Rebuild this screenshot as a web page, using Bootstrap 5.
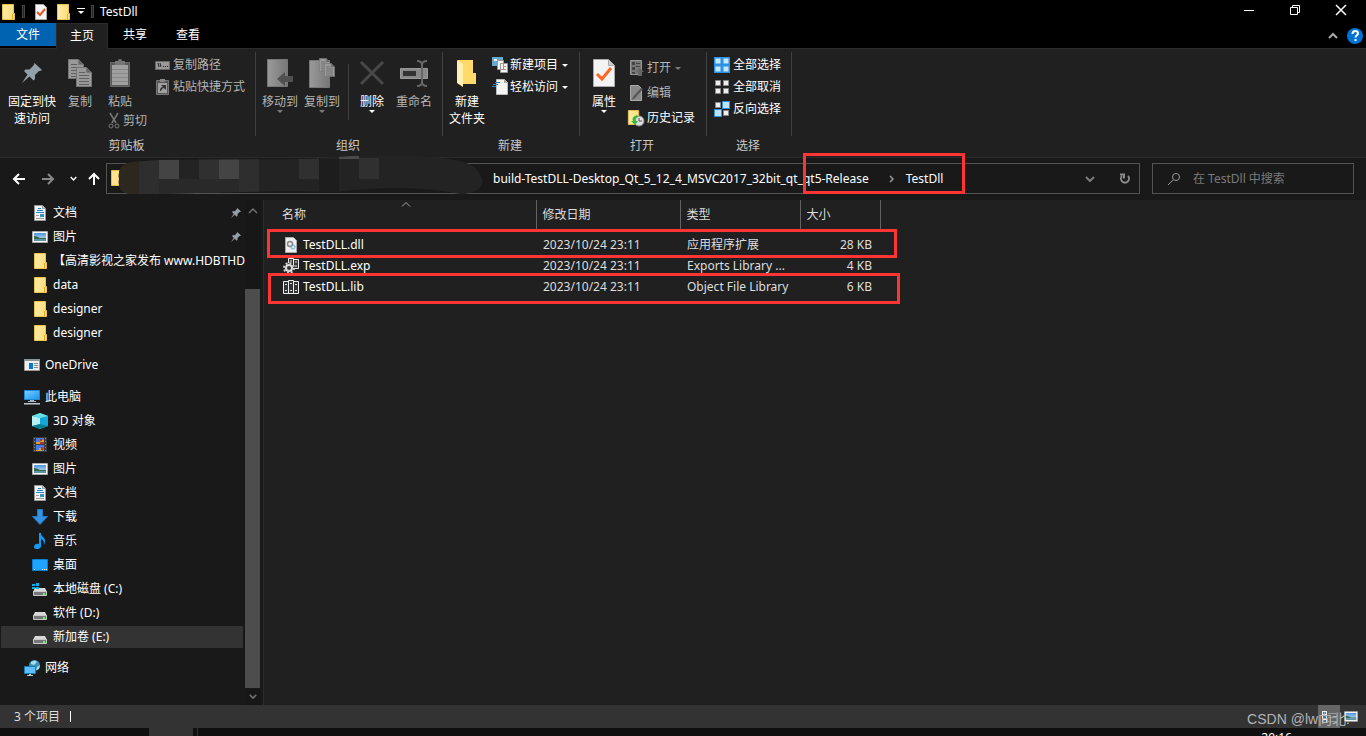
<!DOCTYPE html>
<html lang="zh-CN" data-bs-theme="dark">
<head>
<meta charset="utf-8">
<meta name="viewport" content="width=device-width, initial-scale=1">
<title>TestDll</title>
<link href="https://cdn.jsdelivr.net/npm/bootstrap@5.3.0/dist/css/bootstrap.min.css" rel="stylesheet">
<style>
body{font:12px/16px "Noto Sans","Noto Sans CJK SC",sans-serif;background:#191919;color:#fff}
button{font:inherit;color:inherit;background:none;border:0;padding:0;white-space:nowrap}
svg{display:block;flex:none;overflow:visible}
.titlebar{height:23px;background:#000}
.titlebar .sys{width:46px;height:23px;display:flex;align-items:center;justify-content:center;padding:0 4px 3px 0}
.vbar{width:3px;height:13px;border:1px solid #444;background:#222}
.quick{gap:6px}
.quick .vbar:first-of-type{margin-right:2px}
.tabs{height:26px;background:#000;border-bottom:1px solid #2b2b2b}
.tabs button{height:26px;padding:0 14px 2px 15px}
.tabs .file{background:#0063b1;width:56px;height:23px;padding:0}
.tabs .active{background:#202020;border:1px solid #2b2b2b;border-bottom:0;width:52px;padding:0 0 2px}
.tabs .fold{padding:0;height:auto;color:#aaa}
.ribbon{background:#202020;height:109px;border-bottom:1px solid #2b2b2b}
.rgroup{position:relative;display:flex;flex-direction:column;height:108px}
.rgroup::after{content:"";position:absolute;right:0;top:3px;height:84px;width:1px;background:#414141}
.rbody{display:flex;height:88px;padding-top:8px}
.rname{text-align:center;line-height:17px;color:#c8c8c8;padding-right:3px}
.big{display:flex;flex-direction:column;align-items:center;line-height:17px}
.big .pic{height:32px;margin-bottom:4px;display:flex;align-items:center}
.smallb{display:flex;align-items:center;height:22px}
.smallb svg{margin-right:3px}
.stack{margin-top:-3px}
.stack-loose{display:flex;flex-direction:column;gap:3px}
.dim{color:#b4b4b4}.dim2{color:#7c7c7c}
.caret{width:0;height:0;border:3px solid transparent;border-top-color:currentColor;border-bottom:0}
.g1{width:256px}.g2{width:187px}.g3{width:137px}.g4{width:127px}.g5{width:85px}
.g2 .rbody{padding-left:6px;gap:6px}
.g3 .rbody{padding-left:6px;gap:7px}
.g3 .smallb svg{margin-right:2px}
.g5 .rbody{padding:5px 0 0 7px}
.insep{width:1px;height:56px;margin:7px 5px 0 2px;background:#414141}
.rename{margin-left:6px}
.addr{height:42px;padding:5px 12px 6px 12px}
.field{border:1px solid #535353;height:31px;position:relative}
.crumbs{padding-left:386px;margin-left:7px}
.search{width:202px;margin-left:12px}
.field input{background:none;border:0;outline:0;color:#7a7a7a;width:100%;padding:0}
.field input::placeholder{color:#7a7a7a;opacity:1}
.crumb-arrow{margin:0 12px 0 21px}
.blot{left:2px;top:-9px}
.note{position:absolute;border:3px solid #ff3434;pointer-events:none}
.note-path{left:-103px;right:-22px;top:-18px;bottom:-7px}
.note-dll{left:3px;top:-5px;width:630px;height:29px}
.note-lib{left:4px;top:-3px;width:632px;height:31px}
.side{width:245px;overflow:hidden;padding-top:1px}
.side a{display:flex;align-items:center;height:24px;padding-left:24px;color:#fff;text-decoration:none;white-space:nowrap;overflow:hidden}
.side a svg{margin-right:5px}
.side .kid{padding-left:32px}
.side .sel{background:#333;height:22px;margin:1px 2px 1px 1px;padding-left:31px}
.side span{flex:1;overflow:hidden}
.scroll{width:15px;background:#171717;color:#707070;padding:8px 0 6px}
.scroll .thumb{background:#4d4d4d;flex:1;margin:76px 0 6px}
.files{background:#202020;border-left:1px solid #2b2b2b;margin-left:3px}
.files table{table-layout:fixed;width:616px;color:#dedede}
.files th{font-weight:400;height:29px;padding:0 6px;border-right:1px solid #636363;position:relative}
.files td{height:21px;padding:0 6px 0 7px;position:relative;white-space:nowrap;line-height:20px}
.files tbody::before{content:"";display:block;height:5px}
.files th:first-child{padding-left:18px}
.files td:first-child{color:#fff;padding-left:19px}
.files td:last-child{text-align:right;padding-right:8px}
.sorter{position:absolute;left:138px;top:2px}
.status{height:23px;background:#333;color:#dedede;position:relative;padding-left:14px}
.tick{width:1px;height:11px;margin-left:10px;background:#fff}
.view{width:22px;height:23px;display:flex;align-items:center;justify-content:center}
.view.on{background:#666}
.mark-csdn{position:absolute;right:16px;top:5px;font:14px/18px "Liberation Sans","Noto Sans CJK SC",sans-serif;color:#b4b4b4}
.task{height:8px;background:#0f0f0f;overflow:hidden}
.task .app{width:44px;background:#333;margin-left:149px}
.task .edge{width:1px;background:#333}
.task .clock{margin-right:74px;padding-top:2px}
</style>
</head>
<body class="vh-100 d-flex flex-column overflow-hidden">
<svg width="0" height="0" class="position-absolute" aria-hidden="true">
<defs><linearGradient id="fg"><stop stop-color="#ffecaa"/><stop offset="1" stop-color="#ffdc76"/></linearGradient>
<linearGradient id="grey"><stop stop-color="#9a9a9a"/><stop offset="1" stop-color="#777"/></linearGradient>
<linearGradient id="scr" x2="1" y2="1"><stop stop-color="#78cfff"/><stop offset="1" stop-color="#1693f2"/></linearGradient>
<linearGradient id="sky" x2="0" y2="1"><stop stop-color="#4f93dd"/><stop offset="1" stop-color="#d7ecf7"/></linearGradient></defs>
<symbol id="folder" viewBox="0 0 16 16"><path d="M2.500.5h11v9h1v6h-12z" fill="url(#fg)" stroke="#edc24d"/><path d="M12.500 10v5" stroke="#e0ac32"/></symbol>
<symbol id="pin" viewBox="0 0 20 20"><path d="M12.500 0 20 7l-2 1-1 0-4 4 0 4-1.500 1.500-4-4L0 20l5.500-8.500L2 8l1.500-1.500h4l4-4z" fill="#93a0aa"/></symbol>
<symbol id="doc" viewBox="0 0 16 16"><path d="M2.500.5h8l3 3v12h-11z" fill="#f5f5f5" stroke="#999"/><path d="M10.500.5v3h3" fill="#ccc" stroke="#999"/><path d="M6 3.500h3M5 5.500h6M4 7.500h8" stroke="#1685d8"/><path d="M4 10.500h3M4 13.500h8" stroke="#999"/><path d="M8 9h4v3H8z" fill="#378fbe"/></symbol>
<symbol id="image" viewBox="0 0 16 12"><path d="M.5.5h15v11H.5z" fill="#fff" stroke="#aaa"/><path d="M2 2h12v8H2z" fill="url(#sky)"/><path d="M2 5q3 0 6 2h6v1H2z" fill="#34694d"/><path d="M2 8h12v2H2z" fill="#5f93a6"/></symbol>
<symbol id="onedrive" viewBox="0 0 16 12"><path d="M.5.5h15v11H.5z" fill="#eee" stroke="#999"/><path d="M0 0h16v2H0z" fill="#89949b"/><path d="M5 4h4v6H5z" fill="#0078d7"/><path d="M10 4.500h4M10 6.500h4M10 8.500h4" stroke="#888"/></symbol>
<symbol id="pc" viewBox="0 0 16 16"><path d="M.5 1.500h15v9H.5z" fill="url(#scr)" stroke="#2388d2"/><path d="M6 11h4v1h2v1H4v-1h2z" fill="#a8bac6"/><path d="M0 14h16v1.500H0z" fill="#bcc8d0"/></symbol>
<symbol id="cube" viewBox="0 0 16 16"><path d="m0 3 8-3 8 3v10l-8 3-8-3z" fill="#22bdd0"/><path d="m0 3 8 2v6l-8 2z" fill="#b7f2f2"/><path d="m8 5 8-2v10l-8-2z" fill="#15a6d8"/><path d="m0 3 8-3 8 3-8 2z" fill="#65dfe3"/><path d="m0 13 8-2 8 2-8 3z" fill="#087f94"/></symbol>
<symbol id="film" viewBox="0 0 16 16"><path d="M1 0h14v15H1z" fill="#3c3c3c"/><path d="M4 1h8v6H4zm0 7h8v6H4z" fill="#487bed"/><path d="M4 5h4V3h4v4H4zm0 8h3v-2h3v3H4z" fill="#dfa12a"/><path d="M8 5h4v2H8zm0-3h2v2H8zm1 8h2v3H9z" fill="#a8352c"/><path d="M2.500 1v14M13.500 1v14" stroke="#868686" stroke-dasharray="1 2"/></symbol>
<symbol id="down" viewBox="0 0 16 16"><path d="M5.500.5h5v7h5L8 15.500.5 7.500h5z" fill="#3292e4" stroke="#2475c0"/></symbol>
<symbol id="music" viewBox="0 0 16 16"><path d="M7 0h2c0 4 4 4 4 8 0 2-1 4-1 4 0-4-1-5-3-6v7c0 4-7 4-7 1 0-3 3-4 5-3z" fill="#119cf4"/></symbol>
<symbol id="desk" viewBox="0 0 16 12"><path d="M.5.5h15v11H.5z" fill="#1ea5ff" stroke="#087ed5"/><path d="M2 10.500h1m7 0h1m1 0h1m1 0h1" stroke="#fff"/></symbol>
<symbol id="drive" viewBox="0 0 16 16"><path d="M3 7h10l2 4H1z" fill="#d9d9d9"/><path d="M1.500 10.500h13v4h-13z" fill="#777" stroke="#c8c8c8"/><path d="M11 12h2v2h-2z" fill="#5aff58"/></symbol>
<symbol id="net" viewBox="0 0 16 16"><circle cx="10.500" cy="5.500" r="5.500" fill="#3d91b5"/><path d="M7 2q4-3 6 0l-3 3-3-1zM13 7l3-2-1 4-3 1z" fill="#a7dceb"/><path d="M.5 6.500h11v7H.5z" fill="#5ebcff" stroke="#1b7cbb"/><path d="M5 14h2v1h2v1H3v-1h2z" fill="#bbc9d1"/></symbol>
<symbol id="page" viewBox="0 0 16 20"><path d="M.5.5h10l5 5v14H.5z" fill="#999" stroke="#777"/><path d="M10.500.5v5h5" fill="#666" stroke="#777"/><path d="M3 5.500h6M3 8.500h10M3 11.500h10M3 14.500h10M3 17.500h10" stroke="#606060"/></symbol>
<symbol id="chev" viewBox="0 0 10 6"><path d="m1 1 4 4 4-4" fill="none" stroke="currentColor" stroke-width="2"/></symbol>
<symbol id="cells" viewBox="0 0 16 16"><path d="M1.500 1.500h5v5h-5zm8 0h5v5h-5zm-8 8h5v5h-5zm8 0h5v5h-5z"/></symbol>
</svg>

<header class="titlebar d-flex align-items-center">
<div class="quick d-flex align-items-center">
<svg width="16" height="16"><use href="#folder"/></svg><i class="vbar"></i>
<svg width="16" height="16"><path d="M2.500.5h8l3 3v12h-11z" fill="#f5f5f5" stroke="#aaa"/><path d="m4 8 3 3 5-6" fill="none" stroke="#e45721" stroke-width="2"/></svg>
<svg width="16" height="16"><use href="#folder"/></svg>
<svg width="8" height="7"><path d="M0 .5h8" stroke="#fff"/><path d="M1 3h6L4 6z" fill="#fff"/></svg>
<i class="vbar"></i><span>TestDll</span></div>
<div class="ms-auto d-flex">
<button class="sys" aria-label="最小化"><svg width="10" height="10"><path d="M0 5.500h10" stroke="#fff"/></svg></button>
<button class="sys" aria-label="还原"><svg width="10" height="10"><path d="M.5 2.500h7v7h-7zM2.500 2V.5h7v7H8" fill="none" stroke="#fff"/></svg></button>
<button class="sys" aria-label="关闭"><svg width="10" height="10"><path d="m0 0 10 10M10 0 0 10" stroke="#fff" stroke-width="1.500"/></svg></button>
</div>
</header>
<nav class="tabs d-flex">
<button class="file">文件</button><button class="active">主页</button><button>共享</button><button>查看</button>
<div class="ms-auto d-flex align-items-center gap-2 pe-1"><button class="fold" aria-label="折叠"><svg width="10" height="6"><path d="m1 5 4-4 4 4" fill="none" stroke="currentColor" stroke-width="2"/></svg></button>
<svg width="16" height="16"><circle cx="9" cy="8" r="8" fill="#0073d4"/><path d="M6.500 6q0-3 3-3 2.500 0 2.500 2.500c0 1.500-2.500 2-2.500 4M9.500 11v2" fill="none" stroke="#fff" stroke-width="2"/></svg></div>
</nav>

<section class="ribbon d-flex">
<div class="rgroup g1"><div class="rbody ps-2">
<button class="big"><span class="pic"><svg width="20" height="20"><use href="#pin"/></svg></span>固定到快<br>速访问</button>
<button class="big dim ms-2 ps-1"><span class="pic"><svg width="24" height="28"><use href="#page" width="16" height="20"/><use href="#page" x="8" y="8" width="16" height="20"/></svg></span>复制</button>
<div class="ms-3"><button class="big dim"><span class="pic"><svg width="20" height="28"><path d="M.5 3.500h19v24H.5z" fill="#5b5b5b" stroke="#666"/><path d="M2 6h16v20H2z" fill="#a0a0a0"/><path d="M2 10.500h16M2 14.500h16M2 18.500h16M2 22.500h16" stroke="#888"/><path d="M5 2h3a2 2 0 0 1 4 0h3v4H5z" fill="#757575"/></svg></span>粘贴</button>
<button class="smallb dim"><svg width="12" height="16" fill="none" stroke="#777"><path d="m2 0 6 10M10 0 4 10" stroke-width="1.500"/><circle cx="3" cy="13" r="2"/><circle cx="9" cy="13" r="2"/></svg>剪切</button></div>
<div class="ms-2 dim stack"><button class="smallb"><svg width="15" height="9"><path d="M.5.5h14v8H.5z" fill="#999" stroke="#666"/><path d="m3 2 1 4m1-4 1 4M8 5.500h1m1 0h1m1 0h1" stroke="#222"/></svg>复制路径</button>
<button class="smallb"><svg width="15" height="16"><path d="M1.500 1.500h12v14h-12z" fill="#555" stroke="#777"/><path d="M3 4h9v10H3z" fill="#a0a0a0"/><path d="M5 0h5v3H5z" fill="#888"/><path d="M5 12c0-3 1-4 3-4L6 6h5v5L9 9q-2 0-3 3z" fill="#333"/></svg>粘贴快捷方式</button></div>
</div><div class="rname">剪贴板</div></div>

<div class="rgroup g2"><div class="rbody"><button class="big dim"><span class="pic"><svg width="26" height="28"><path d="M.5.500h20v27H.5z" fill="url(#grey)" stroke="#777"/><path d="m10 20 8-7v4h8v6h-8v4z" fill="#505050"/></svg></span>移动到<i class="caret dim2"></i></button>
<button class="big dim"><span class="pic"><svg width="26" height="30"><path d="M.5 2.500h20v27H.5z" fill="url(#grey)" stroke="#777"/><use href="#page" x="10" width="11" height="14"/><use href="#page" x="15" y="5" width="11" height="14"/></svg></span>复制到<i class="caret dim2"></i></button>
<i class="insep"></i>
<button class="big"><span class="pic"><svg width="24" height="24"><path d="m1 1 22 22M23 1 1 23" stroke="#484848" stroke-width="3"/></svg></span>删除<i class="caret"></i></button>
<button class="big dim rename"><span class="pic"><svg width="28" height="27"><path d="M.5 8.500h27v10H.5z" fill="#888" stroke="#999"/><path d="M3 11h13v5H3z" fill="#333"/><path d="M17 1q5 0 5 4v17q0 4-5 4m10-25q-5 0-5 4m0 17q0 4 5 4" fill="none" stroke="#666" stroke-width="2"/></svg></span>重命名</button></div><div class="rname">组织</div></div>

<div class="rgroup g3"><div class="rbody"><button class="big"><span class="pic"><svg width="20" height="28"><path d="M1 1h15v13h3v11H1z" fill="#ffd96a"/><path d="M0 1l6 4v23l-6-4z" fill="#fff0b2"/></svg></span><span>新建<br>文件夹</span></button>
<div class="stack"><button class="smallb"><svg width="16" height="16"><path d="M0 0h11v9H0z" fill="#6aa9cf"/><path d="M5.500 3.500h6v9h-6zm3 3h7v9h-7z" fill="#f5f5f5" stroke="#999"/><path d="M2 2h3v2H2z" fill="#eee"/><path d="M11 9.500h3m-3 3h3" stroke="#df7c6b"/></svg><span>新建项目</span><i class="caret ms-1"></i></button>
<button class="smallb"><svg width="16" height="16"><path d="M4.500.5h8l3 3v12h-11z" fill="#f5f5f5" stroke="#bbb"/><path d="M12 0v4h4" fill="#aaa"/><path d="M3 3.500h5M1 5.500h5M0 7.500h4" stroke="#2b80ba"/></svg><span>轻松访问</span><i class="caret ms-1"></i></button></div></div><div class="rname">新建</div></div>

<div class="rgroup g4"><div class="rbody"><button class="big ms-2 ps-1"><span class="pic"><svg width="22" height="28"><path d="M.5.5h15l6 6v21H.5z" fill="#f3f3f3" stroke="#aaa"/><path d="M15.500.5v6h6" fill="#ccc" stroke="#aaa"/><path d="m4 15 5 5 9-11" fill="none" stroke="#ff6421" stroke-width="3"/></svg></span>属性<i class="caret"></i></button>
<div class="ms-2 ps-1 stack-loose"><button class="smallb dim"><svg width="16" height="16"><path d="M2.500.5h11v14h-11z" fill="#777" stroke="#999"/><path d="M4 2h3v3H4zm0 5h3v3H4zm0 5h3v2H4z" fill="#444"/><path d="M8 3.500h4m-4 3h4" stroke="#444"/><path d="m12 8 4 4h-2v4h-4v-4H8z" fill="#666"/></svg>打开<i class="caret ms-1 dim2"></i></button>
<button class="smallb dim"><svg width="16" height="16"><path d="M2.500.5h8l3 3v12h-11z" fill="#888" stroke="#aaa"/><path d="m15 4-9 10-2 1 1-3 8-9z" fill="#555"/></svg>编辑</button>
<button class="smallb"><svg width="16" height="16"><use href="#folder" x="-2" width="15" height="15"/><circle cx="11" cy="11" r="5" fill="#ddd" stroke="#888"/><path d="M11 8v3h3" fill="none" stroke="#555"/><path d="M9 5Q3 7 5 11H3l4 4 3-4H8q-1-3 2-4z" fill="#35ba38"/></svg>历史记录</button></div></div><div class="rname">打开</div></div>

<div class="rgroup g5"><div class="rbody flex-column"><button class="smallb"><svg width="16" height="16"><path d="M0 0h16v16H0z" fill="#2e91e2"/><use href="#cells" fill="#c4e8ff"/></svg>全部选择</button>
<button class="smallb"><svg width="16" height="16"><use href="#cells" fill="#eee" stroke="#888"/></svg>全部取消</button>
<button class="smallb"><svg width="16" height="16"><use href="#cells" fill="#eee" stroke="#888"/><path d="M8.500.5h7v7h-7zm-8 8h7v7h-7z" fill="#b9e3ff" stroke="#2e91e2"/></svg>反向选择</button></div><div class="rname">选择</div></div>
</section>

<section class="addr d-flex align-items-center">
<button aria-label="后退"><svg width="13" height="12"><path d="M13 6H2m5-5L2 6l5 5" fill="none" stroke="#fff" stroke-width="2"/></svg></button>
<button class="ms-3" aria-label="前进"><svg width="13" height="12"><path d="M1 6h11M7 1l5 5-5 5" fill="none" stroke="#888" stroke-width="2"/></svg></button>
<button class="ms-3" aria-label="最近"><svg width="7" height="5"><use href="#chev"/></svg></button>
<button class="ms-2 ps-1" aria-label="向上"><svg width="10" height="13"><path d="M5 13V2M0 7l5-5 5 5" fill="none" stroke="#fff" stroke-width="2"/></svg></button>
<div class="field crumbs flex-grow-1 d-flex align-items-center">
<svg width="380" height="44" class="position-absolute blot" aria-hidden="true"><path d="M2.500 15.500h9v15h-9z" fill="#ffe38c" stroke="#e9bd45"/>
<clipPath id="blot"><path d="M10 24Q8 10 22 7L50 5l150-1L243 1q115-3 125 14 12 15-2 21-7 4-15 3-50-11-125-2L180 36 40 39H22Q8 38 10 24z"/></clipPath>
<g clip-path="url(#blot)"><path d="M0 0h380v44H0z" fill="#232323"/><path d="M0 0h30v44H0z" fill="#2c271f"/><path d="M30 0h20v44H30zm60 0h20v44H90zm40 0h20v44h-20z" fill="#2e2e2e"/><path d="M50 0h20v24H50zm60 0h20v24h-20z" fill="#444"/><path d="M90 0h20v24H90zm100 0h20v24h-20zm60 3h20v21h-20z" fill="#303030"/><path d="M230 0h20v4h-20z" fill="#4a4a4a"/><path d="M210 4h20v40h-20z" fill="#1d1d1d"/><path d="M50 24h80v20H50z" fill="#292929"/></g></svg>
<span class="text-nowrap">build-TestDLL-Desktop_Qt_5_12_4_MSVC2017_32bit_qt_qt5-Release</span>
<svg width="4" height="6" class="crumb-arrow"><path d="m0 0 3 3-3 3" fill="none" stroke="#999" stroke-width="1.500"/></svg>
<span class="position-relative">TestDll<i class="note note-path"></i></span>
<button class="ms-auto me-4 dim2" aria-label="展开"><svg width="10" height="6"><use href="#chev"/></svg></button>
<button class="me-2" aria-label="刷新"><svg width="12" height="12"><path d="M3 3a4 4 0 1 0 6 0M1 1.500h4v4" fill="none" stroke="#8b8b8b" stroke-width="2"/></svg></button>
</div>
<label class="field search d-flex align-items-center px-3"><svg width="12" height="12" class="me-2"><circle cx="7" cy="4" r="3.500" fill="none" stroke="#999"/><path d="m4 7-5 5" stroke="#999"/></svg><input class="ms-1" type="search" placeholder="在 TestDll 中搜索" aria-label="搜索"></label>
</section>

<main class="d-flex flex-grow-1" style="min-height:0">
<nav class="side">
<a href="#" class="kid"><svg width="16" height="16"><use href="#doc"/></svg><span>文档</span><svg width="10" height="10" class="me-1"><use href="#pin"/></svg></a>
<a href="#" class="kid"><svg width="16" height="12"><use href="#image"/></svg><span>图片</span><svg width="10" height="10" class="me-1"><use href="#pin"/></svg></a>
<a href="#" class="kid"><svg width="16" height="16"><use href="#folder"/></svg><span>【高清影视之家发布 www.HDBTHD</span></a>
<a href="#" class="kid"><svg width="16" height="16"><use href="#folder"/></svg>data</a>
<a href="#" class="kid"><svg width="16" height="16"><use href="#folder"/></svg>designer</a>
<a href="#" class="kid"><svg width="16" height="16"><use href="#folder"/></svg>designer</a>
<a href="#" class="my-2"><svg width="16" height="12"><use href="#onedrive"/></svg>OneDrive</a>
<a href="#"><svg width="16" height="16"><use href="#pc"/></svg>此电脑</a>
<a href="#" class="kid"><svg width="16" height="16"><use href="#cube"/></svg>3D 对象</a>
<a href="#" class="kid"><svg width="16" height="16"><use href="#film"/></svg>视频</a>
<a href="#" class="kid"><svg width="16" height="12"><use href="#image"/></svg>图片</a>
<a href="#" class="kid"><svg width="16" height="16"><use href="#doc"/></svg>文档</a>
<a href="#" class="kid"><svg width="16" height="16"><use href="#down"/></svg>下载</a>
<a href="#" class="kid"><svg width="16" height="16"><use href="#music"/></svg>音乐</a>
<a href="#" class="kid"><svg width="16" height="12"><use href="#desk"/></svg>桌面</a>
<a href="#" class="kid"><svg width="16" height="16"><use href="#drive"/><path d="M0 3h3v2H0zm4-1h3v3H4zM0 6h3v2H0zm4 0h3v2H4z" fill="#00b2f0"/></svg>本地磁盘 (C:)</a>
<a href="#" class="kid"><svg width="16" height="16"><use href="#drive"/></svg>软件 (D:)</a>
<a href="#" class="kid sel"><svg width="16" height="16"><use href="#drive"/></svg>新加卷 (E:)</a>
<a href="#" class="mt-2"><svg width="16" height="16"><use href="#net"/></svg>网络</a>
</nav>
<div class="scroll d-flex flex-column align-items-center"><svg width="8" height="5"><path d="m0 5 4-4 4 4" fill="none" stroke="currentColor" stroke-width="1.500"/></svg><div class="thumb w-100"></div><svg width="8" height="5"><use href="#chev"/></svg></div>
<section class="files flex-grow-1">
<table><colgroup><col style="width:272px"><col style="width:144px"><col style="width:120px"><col style="width:80px"></colgroup>
<thead><tr><th>名称<svg class="sorter" width="8" height="5"><path d="m0 4.500 4-4 4 4" fill="none" stroke="#aaa"/></svg></th><th>修改日期</th><th>类型</th><th>大小</th></tr></thead>
<tbody>
<tr><td><div class="d-flex align-items-center"><svg width="16" height="16" class="me-1"><path d="M2.500.5h8l3 3v12h-11z" fill="#eee" stroke="#aaa"/><circle cx="7" cy="7" r="2.500" fill="none" stroke="#888" stroke-width="1.500"/><circle cx="10" cy="10" r="2" fill="none" stroke="#63a9cc"/></svg>TestDLL.dll</div><i class="note note-dll"></i></td><td>2023/10/24 23:11</td><td>应用程序扩展</td><td>28 KB</td></tr>
<tr><td><div class="d-flex align-items-center"><svg width="16" height="16" class="me-1"><path d="M5.500.5h5v10h-5zm5 1h5v9h-5z" fill="#333" stroke="#eee"/><path d="M7 3h2M12 4h2m-2 4h2" stroke="#eee"/><circle cx="6" cy="10" r="5" fill="#333" stroke="#ccc" stroke-width="2" stroke-dasharray="2 1.900"/><circle cx="6" cy="10" r="3" fill="#333" stroke="#ddd" stroke-width="2"/></svg>TestDLL.exp</div></td><td>2023/10/24 23:11</td><td>Exports Library ...</td><td>4 KB</td></tr>
<tr><td><div class="d-flex align-items-center"><svg width="16" height="14" class="me-1"><path d="M.5 1.500h5v12h-5zm5-1h5v13h-5zm5 1h5v12h-5z" fill="#333" stroke="#eee"/><path d="M2 4.500h2m3-1h2m3 1h2M2 10.500h2m3 0h2m3 0h2" stroke="#ddd"/></svg>TestDLL.lib</div><i class="note note-lib"></i></td><td>2023/10/24 23:11</td><td>Object File Library</td><td>6 KB</td></tr>
</tbody></table>
</section>
</main>
<footer class="status d-flex align-items-center"><span>3 个项目</span><i class="tick"></i>
<button class="view on ms-auto" aria-label="详细信息"><svg width="14" height="12"><path d="M0 0h5v12H0z" fill="#eee"/><path d="M1 2h3M1 6h3M1 10h3" stroke="#287fc2" stroke-width="2"/><path d="M6 2.500h8M6 6.500h8M6 10.500h8" stroke="#999"/></svg></button><button class="view me-1" aria-label="大图标"><svg width="14" height="11"><use href="#image"/></svg></button>
<span class="mark-csdn">CSDN @lw向北.</span></footer>
<div class="task d-flex"><div class="app"></div><i class="edge ms-1"></i><span class="clock ms-auto">20:16</span></div>
<script src="https://cdn.jsdelivr.net/npm/bootstrap@5.3.0/dist/js/bootstrap.bundle.min.js"></script>
</body>
</html>
